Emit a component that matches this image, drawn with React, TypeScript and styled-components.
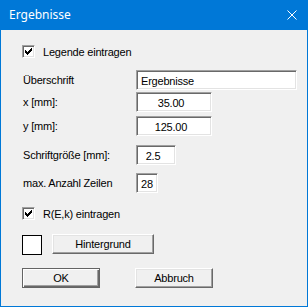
import React from "react";
import styled, { createGlobalStyle, css } from "styled-components";

const GlobalStyle = createGlobalStyle`
  html, body { margin: 0; padding: 0; background: #ffffff; }
  * { box-sizing: border-box; }
`;

const Window = styled.div`
  width: 308px;
  height: 307px;
  border: 1px solid #0078d7;
  border-top: none;
  background: #f0f0f0;
  display: flex;
  flex-direction: column;
  font-family: "Liberation Sans", Arial, sans-serif;
  font-size: 11px;
  letter-spacing: -0.2px;
  color: #000;
`;

const TitleBar = styled.div`
  height: 30px;
  margin: 0 -1px;
  background: #0078d7;
  color: #fff;
  display: flex;
  align-items: center;
  justify-content: space-between;
  padding: 0 11px 1px 9px;
  font-family: "Noto Sans", "Open Sans", sans-serif;
  font-size: 12px;
  letter-spacing: 0;
`;

const Body = styled.div`
  display: flex;
  flex-direction: column;
  padding: 15px 0 0 21px;
`;

const CheckRow = styled.label<{ $top: number }>`
  display: flex;
  align-items: center;
  gap: 8px;
  height: 13px;
  margin-top: ${(p) => p.$top}px;
`;

const CheckBox = styled.span`
  width: 13px;
  height: 13px;
  background: #fff;
  border: 1px solid;
  border-color: #a0a0a0 #fff #fff #a0a0a0;
  box-shadow: inset 1px 1px #696969, inset -1px -1px #e3e3e3;
  display: flex;
  align-items: center;
  justify-content: center;
`;

const FieldRow = styled.div<{ $top: number }>`
  display: flex;
  align-items: center;
  height: 20px;
  margin-top: ${(p) => p.$top}px;
`;

const Label = styled.span`
  width: 114px;
  padding-left: 1px;
  white-space: nowrap;
`;

const Field = styled.input<{ $w: number; $center?: boolean; $pr?: number }>`
  width: ${(p) => p.$w}px;
  height: 20px;
  margin: 0;
  background: #fff;
  border: 1px solid;
  border-color: #a0a0a0 #fff #fff #a0a0a0;
  box-shadow: inset 1px 1px #696969, inset -1px -1px #e3e3e3;
  font: inherit;
  letter-spacing: inherit;
  color: #000;
  outline: none;
  padding: 1px ${(p) => p.$pr ?? 2}px 0 4px;
  text-align: ${(p) => (p.$center ? "center" : "left")};
`;

const ButtonRow = styled.div<{ $top: number; $gap: number }>`
  display: flex;
  align-items: flex-start;
  gap: ${(p) => p.$gap}px;
  margin-top: ${(p) => p.$top}px;
`;

const Swatch = styled.div`
  width: 20px;
  height: 20px;
  margin-top: 1px;
  background: #fff;
  border: 1px solid #000;
`;

const Button = styled.button<{ $w: number; $default?: boolean }>`
  width: ${(p) => p.$w}px;
  height: 20px;
  margin: 0;
  padding: 0 0 1px;
  background: #f0f0f0;
  font: inherit;
  letter-spacing: inherit;
  color: #000;
  border: 1px solid;
  border-color: #fff #696969 #696969 #fff;
  box-shadow: inset -1px -1px #a0a0a0, inset 1px 1px #e3e3e3;
  ${(p) =>
    p.$default &&
    css`
      border-color: #646464;
      box-shadow: inset 1px 1px #fff, inset -1px -1px #696969,
        inset -2px -2px #a0a0a0;
    `}
`;

const CloseIcon = () => (
  <svg width="10" height="10" viewBox="0 0 10 10">
    <path d="M0.5 0.5 L9.5 9.5 M9.5 0.5 L0.5 9.5" stroke="#fff" strokeWidth="1" />
  </svg>
);

const Check = () => (
  <svg width="7" height="7" viewBox="0 0 7 7" shapeRendering="crispEdges">
    <rect x="6" y="0" width="1" height="1" fill="#000" />
    <rect x="5" y="1" width="2" height="1" fill="#000" />
    <rect x="0" y="2" width="1" height="1" fill="#000" />
    <rect x="4" y="2" width="3" height="1" fill="#000" />
    <rect x="0" y="3" width="2" height="1" fill="#000" />
    <rect x="3" y="3" width="3" height="1" fill="#000" />
    <rect x="0" y="4" width="5" height="1" fill="#000" />
    <rect x="1" y="5" width="3" height="1" fill="#000" />
    <rect x="2" y="6" width="1" height="1" fill="#000" />
  </svg>
);

export default function App() {
  return (
    <>
      <GlobalStyle />
      <Window>
        <TitleBar>
          <span>Ergebnisse</span>
          <CloseIcon />
        </TitleBar>
        <Body>
          <CheckRow $top={0}>
            <CheckBox>
              <Check />
            </CheckBox>
            <span>Legende eintragen</span>
          </CheckRow>
          <FieldRow $top={12}>
            <Label>Überschrift</Label>
            <Field $w={161} readOnly defaultValue="Ergebnisse" />
          </FieldRow>
          <FieldRow $top={2}>
            <Label>x [mm]:</Label>
            <Field $w={76} $center $pr={10} readOnly defaultValue="35.00" />
          </FieldRow>
          <FieldRow $top={4}>
            <Label>y [mm]:</Label>
            <Field $w={76} $center $pr={10} readOnly defaultValue="125.00" />
          </FieldRow>
          <FieldRow $top={9}>
            <Label>Schriftgröße [mm]:</Label>
            <Field $w={40} $center $pr={10} readOnly defaultValue="2.5" />
          </FieldRow>
          <FieldRow $top={8}>
            <Label>max. Anzahl Zeilen</Label>
            <Field $w={22} readOnly defaultValue="28" />
          </FieldRow>
          <CheckRow $top={14}>
            <CheckBox>
              <Check />
            </CheckBox>
            <span>R(E,k) eintragen</span>
          </CheckRow>
          <ButtonRow $top={14} $gap={10}>
            <Swatch />
            <Button $w={102}>Hintergrund</Button>
          </ButtonRow>
          <ButtonRow $top={13} $gap={35}>
            <Button $w={78} $default>
              OK
            </Button>
            <Button $w={78}>Abbruch</Button>
          </ButtonRow>
        </Body>
      </Window>
    </>
  );
}
